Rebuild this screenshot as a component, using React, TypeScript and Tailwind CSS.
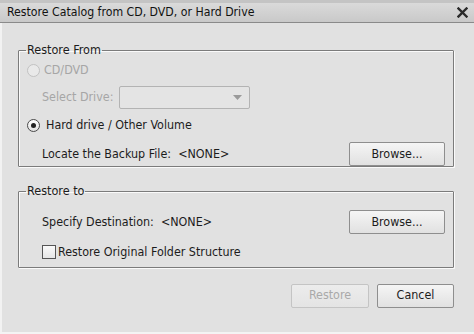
import { useState } from "react";

function Radio({ checked, disabled }: { checked?: boolean; disabled?: boolean }) {
  return (
    <span
      className={`flex h-[13px] w-[13px] items-center justify-center rounded-full border ${
        disabled
          ? "border-[#c2c2c2] bg-[#e9e9e9]"
          : "border-[#4a4a4a] bg-gradient-to-b from-[#ffffff] to-[#e2e2e2]"
      }`}
    >
      {checked && <span className="h-[5px] w-[5px] rounded-full bg-[#222]" />}
    </span>
  );
}

function Button({ children, disabled, className = "" }: { children: React.ReactNode; disabled?: boolean; className?: string }) {
  return (
    <button
      disabled={disabled}
      className={`flex h-[24px] items-center justify-center rounded-[2px] border bg-gradient-to-b ${
        disabled
          ? "border-[#c4c4c4] from-[#ececec] to-[#e4e4e4] text-[#a9a9a9]"
          : "border-[#8e8e8e] from-[#f5f5f5] to-[#e1e1e1] text-[#1c1c1c]"
      } ${className}`}
    >
      {children}
    </button>
  );
}

export default function App() {
  const [keepFolders] = useState(false);

  return (
    <div className="flex h-[334px] w-[474px] flex-col bg-[#e1e1e1] font-['DejaVu_Sans_Condensed','Liberation_Sans',sans-serif] text-[12.4px] text-[#1c1c1c]">
      {/* top edge */}
      <div className="h-[3px] bg-[#c4c4c4]" />

      {/* Title bar */}
      <div className="flex h-[20px] items-center justify-between border-b border-[#8a8a8a] bg-gradient-to-b from-[#dadada] to-[#c9c9c9] pl-[7px] pr-[6px]">
        <span className="text-[12.2px] text-[#111]">Restore Catalog from CD, DVD, or Hard Drive</span>
        <svg width="11" height="11" viewBox="0 0 11 11">
          <path d="M1.5 1.5 L9.5 9.5 M9.5 1.5 L1.5 9.5" stroke="#2a2a2a" strokeWidth="2.4" strokeLinecap="square" />
        </svg>
      </div>

      {/* Body */}
      <div className="flex flex-1 flex-col border-l-2 border-[#f2f2f2] pl-[16px] pr-[20px] pt-[19px]">
        {/* Restore From */}
        <fieldset className="rounded-[1px] border border-[#7b7b7b] pl-[8px] pr-[8px] shadow-[1px_1px_0_#fafafa,inset_1px_1px_0_#fafafa]">
          <legend className="ml-[-1px] px-[1px] text-[12.5px] leading-[16px]">Restore From</legend>

          <div className="mt-[3px] flex h-[18px] items-center gap-[4px] text-[#a6a6a6]">
            <Radio disabled />
            <span>CD/DVD</span>
          </div>

          <div className="mt-[6px] flex h-[24px] items-center pl-[15px] text-[#a6a6a6]">
            <span className="w-[77px]">Select Drive:</span>
            <div className="flex h-[23px] w-[131px] items-center justify-end rounded-[2px] border border-[#b3b3b3] bg-[#e4e4e4] pr-[7px]">
              <svg width="9" height="5" viewBox="0 0 9 5">
                <path d="M0 0 H9 L4.5 5 Z" fill="#9a9a9a" />
              </svg>
            </div>
          </div>

          <div className="mt-[7px] flex h-[18px] items-center gap-[6px]">
            <Radio checked />
            <span>Hard drive / Other Volume</span>
          </div>

          <div className="mt-[8px] flex items-center justify-between pl-[15px]">
            <span>
              Locate the Backup File:&nbsp;&nbsp;&lt;NONE&gt;
            </span>
            <Button className="w-[96px]">Browse...</Button>
          </div>
        </fieldset>

        {/* Restore to */}
        <fieldset className="mt-[16px] rounded-[1px] border border-[#7b7b7b] pb-[5px] pl-[8px] pr-[8px] shadow-[1px_1px_0_#fafafa,inset_1px_1px_0_#fafafa]">
          <legend className="ml-[-1px] px-[1px] text-[12.5px] leading-[16px]">Restore to</legend>

          <div className="mt-[11px] flex items-center justify-between pl-[15px]">
            <span>Specify Destination:&nbsp;&nbsp;&lt;NONE&gt;</span>
            <Button className="w-[96px]">Browse...</Button>
          </div>

          <div className="mt-[9px] flex items-center gap-[2px] pl-[15px]">
            <span className="h-[14px] w-[14px] border border-[#555] bg-gradient-to-b from-[#fafafa] to-[#e6e6e6]">
              {keepFolders && "✓"}
            </span>
            <span>Restore Original Folder Structure</span>
          </div>
        </fieldset>

        {/* Footer buttons */}
        <div className="mt-[16px] flex justify-end gap-[8px]">
          <Button disabled className="w-[78px]">Restore</Button>
          <Button className="w-[77px]">Cancel</Button>
        </div>
      </div>

      <div className="h-[2px] bg-[#f4f4f4]" />
    </div>
  );
}
